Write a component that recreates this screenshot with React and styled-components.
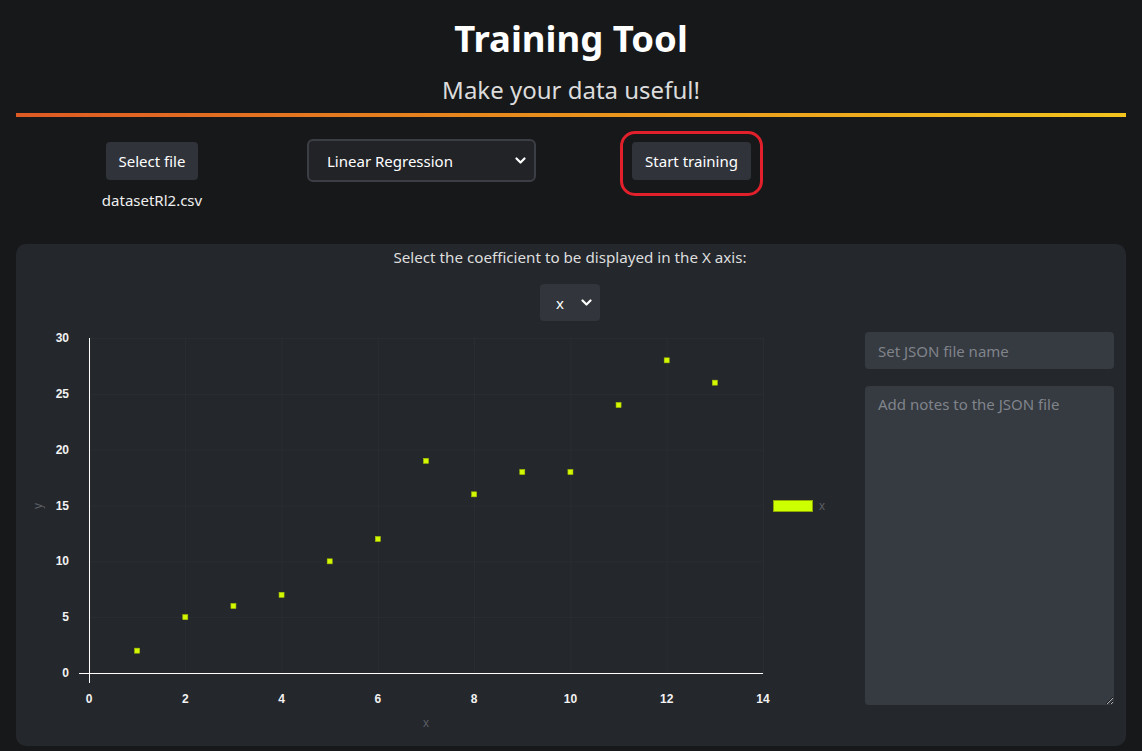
import React from 'react'
import styled, { createGlobalStyle } from 'styled-components'

const GlobalStyle = createGlobalStyle`
  html, body {
    margin: 0;
    padding: 0;
    background: #17181a;
  }
  body {
    font-family: "Noto Sans", "Open Sans", sans-serif;
    color: #fff;
  }
`

const Page = styled.div`
  width: 1142px;
  height: 751px;
  padding: 0 16px;
  box-sizing: border-box;
  overflow: hidden;
`

const Title = styled.h1`
  margin: 0;
  padding-top: 12px;
  font-size: 36.5px;
  line-height: 52px;
  font-weight: 700;
  text-align: center;
  color: #fff;
`

const Subtitle = styled.h2`
  margin: 10px 0 0;
  font-size: 24px;
  line-height: 32px;
  font-weight: 400;
  text-align: center;
  color: #dcdcdc;
`

const Rule = styled.div`
  margin-top: 7px;
  height: 4px;
  background: linear-gradient(90deg, #de5a24 0%, #e9911c 50%, #f2c41e 100%);
`

const Controls = styled.div`
  display: flex;
  align-items: flex-start;
  margin-top: 14px;
  padding-left: 86px;
`

const FileGroup = styled.div`
  width: 100px;
  padding-top: 11px;
  display: flex;
  flex-direction: column;
  align-items: center;
`

const Button = styled.button`
  height: 38px;
  padding: 0 13px;
  border: none;
  border-radius: 4px;
  background: #30333a;
  color: #fff;
  font-family: inherit;
  font-size: 15px;
  white-space: nowrap;
`

const FileName = styled.div`
  margin-top: 10px;
  font-size: 15px;
  line-height: 20px;
  color: #eee;
`

const SelectWrap = styled.div`
  position: relative;
  width: ${p => p.$width}px;
  height: ${p => p.$height}px;
  margin-top: ${p => p.$top || 0}px;
  margin-left: ${p => p.$left || 0}px;
`

const Select = styled.select`
  appearance: none;
  width: 100%;
  height: 100%;
  box-sizing: border-box;
  border: ${p => (p.$outlined ? '2px solid #3b3e44' : 'none')};
  border-radius: ${p => (p.$outlined ? 6 : 4)}px;
  background: ${p => (p.$outlined ? '#212327' : '#32363c')};
  color: #fff;
  font-family: inherit;
  font-size: 15px;
  padding-left: ${p => p.$pad}px;
  outline: none;
`

const Chevron = styled.svg`
  position: absolute;
  right: ${p => p.$right}px;
  top: 50%;
  margin-top: -4px;
  pointer-events: none;
`

const Highlight = styled.div`
  margin-left: 84px;
  width: 143px;
  height: 65px;
  box-sizing: border-box;
  padding-top: 8px;
  border: 3px solid #e1202b;
  border-radius: 15px;
  display: flex;
  align-items: flex-start;
  justify-content: center;
`

const Panel = styled.section`
  margin-top: 34px;
  height: 502px;
  box-sizing: border-box;
  border-radius: 10px;
  background: #24272c;
  padding: 3px 12px 0 10px;
  display: flex;
  flex-direction: column;
`

const Prompt = styled.div`
  font-size: 15.2px;
  line-height: 20px;
  text-align: center;
  color: #dedede;
`

const AxisPick = styled.div`
  display: flex;
  justify-content: center;
  margin-top: 17px;
`

const Body = styled.div`
  display: flex;
  margin-top: 9px;
  gap: 29px;
`

const Side = styled.div`
  width: 249px;
  margin-top: 2px;
  display: flex;
  flex-direction: column;
  gap: 17px;
`

const fieldStyle = `
  box-sizing: border-box;
  width: 100%;
  border: none;
  border-radius: 4px;
  background: #363a41;
  color: #fff;
  font-family: "Noto Sans", "Open Sans", sans-serif;
  font-size: 15px;
  padding: 0 13px;
  outline: none;
  &::placeholder { color: #80848b; }
`

const TextInput = styled.input`
  ${fieldStyle}
  height: 37px;
`

const Notes = styled.textarea`
  ${fieldStyle}
  height: 319px;
  padding-top: 8px;
  resize: vertical;
`

const ChevronIcon = ({ right }) => (
  <Chevron $right={right} width="11" height="8" viewBox="0 0 11 8">
    <path d="M1.5 1.5 L5.5 5.5 L9.5 1.5" fill="none" stroke="#fff" strokeWidth="2.2" strokeLinecap="round" strokeLinejoin="round" />
  </Chevron>
)

const points = [
  [1, 2], [2, 5], [3, 6], [4, 7], [5, 10], [6, 12], [7, 19],
  [8, 16], [9, 18], [10, 18], [11, 24], [12, 28], [13, 26],
]

// chart box sits at page (26, 330)
const X0 = 63
const X1 = 737
const Y0 = 343
const Y1 = 8
const px = v => X0 + (v / 14) * (X1 - X0)
const py = v => Y0 - (v / 30) * (Y0 - Y1)

const Chart = () => {
  const xTicks = [0, 2, 4, 6, 8, 10, 12, 14]
  const yTicks = [0, 5, 10, 15, 20, 25, 30]
  return (
    <svg width="810" height="405" style={{ flex: 'none' }}>
      <g stroke="rgba(255,255,255,0.028)" strokeWidth="1">
        {xTicks.slice(1).map(t => (
          <line key={'gx' + t} x1={px(t) + 0.5} x2={px(t) + 0.5} y1={Y1} y2={Y0} />
        ))}
        {yTicks.slice(1).map(t => (
          <line key={'gy' + t} x1={X0} x2={X1} y1={py(t) + 0.5} y2={py(t) + 0.5} />
        ))}
      </g>
      <line x1={X0 + 0.5} x2={X0 + 0.5} y1={Y1} y2={Y0 + 10} stroke="#fff" strokeWidth="1" />
      <line x1={X0 - 10} x2={X1} y1={Y0 + 0.5} y2={Y0 + 0.5} stroke="#fff" strokeWidth="1" />
      <g fill="#f2f2f2" fontFamily='"Liberation Sans", Arial, sans-serif' fontSize="12" fontWeight="700">
        {yTicks.map(t => (
          <text key={'ty' + t} x={X0 - 20} y={py(t) + 4} textAnchor="end">{t}</text>
        ))}
        {xTicks.map(t => (
          <text key={'tx' + t} x={px(t)} y={373} textAnchor="middle">{t}</text>
        ))}
      </g>
      <g fill="#5b5e63" fontFamily='"Liberation Sans", Arial, sans-serif' fontSize="12">
        <text x={400} y={397} textAnchor="middle">x</text>
        <text x={0} y={0} textAnchor="middle" transform="translate(16 176) rotate(-90)">y</text>
        <text x={793} y={180}>x</text>
      </g>
      <rect x={747.5} y={170.5} width={39} height={11} fill="#ccff00" stroke="#8fa800" strokeWidth="1" />
      {points.map(([x, y]) => (
        <rect key={x} x={px(x) - 2.5} y={py(y) - 2.5} width={5} height={5} fill="#d4f800" stroke="#a8c400" strokeWidth="0.6" />
      ))}
    </svg>
  )
}

export default function App() {
  return (
    <Page>
      <GlobalStyle />
      <Title>Training Tool</Title>
      <Subtitle>Make your data useful!</Subtitle>
      <Rule />
      <Controls>
        <FileGroup>
          <Button>Select file</Button>
          <FileName>datasetRl2.csv</FileName>
        </FileGroup>
        <SelectWrap $width={229} $height={43} $top={8} $left={105}>
          <Select $outlined $pad={18} defaultValue="lr">
            <option value="lr">Linear Regression</option>
            <option value="log">Logistic Regression</option>
          </Select>
          <ChevronIcon right={10} />
        </SelectWrap>
        <Highlight>
          <Button>Start training</Button>
        </Highlight>
      </Controls>
      <Panel>
        <Prompt>Select the coefficient to be displayed in the X axis:</Prompt>
        <AxisPick>
          <SelectWrap $width={60} $height={37}>
            <Select $pad={16} defaultValue="x">
              <option value="x">x</option>
            </Select>
            <ChevronIcon right={8} />
          </SelectWrap>
        </AxisPick>
        <Body>
          <Chart />
          <Side>
            <TextInput placeholder="Set JSON file name" />
            <Notes placeholder="Add notes to the JSON file" />
          </Side>
        </Body>
      </Panel>
    </Page>
  )
}
